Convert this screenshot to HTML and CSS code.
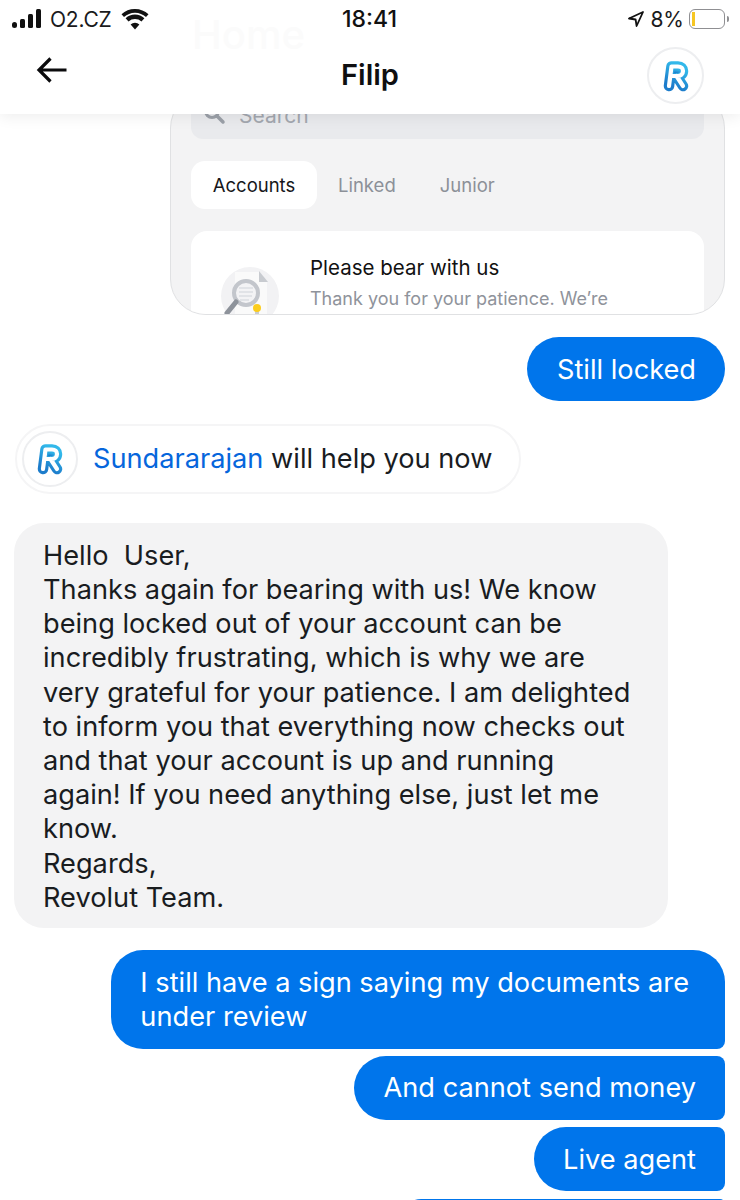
FILE: index.html
```html
<!DOCTYPE html>
<html lang="en">
<head>
<meta charset="utf-8">
<title>Filip</title>
<link rel="stylesheet" href="styles.css">
</head>
<body>
<div class="phone">
  <header class="top">
    <div class="ghost-home">Home</div>
    <div class="status">
      <div class="status-left">
        <svg class="signal" width="34" height="20" viewBox="0 0 34 20"><rect x="0" y="13" width="5" height="6" rx="2.5"/><rect x="8" y="10" width="5" height="9" rx="1.5"/><rect x="16" y="5" width="5" height="14" rx="1.5"/><rect x="24" y="0" width="5" height="19" rx="1.5"/></svg>
        <span class="carrier">O2.CZ</span>
        <svg class="wifi" width="28" height="21" viewBox="0 0 28 21"><path d="M14 20.5 9.6 15.6a6.4 6.4 0 0 1 8.8 0Z"/><path d="M14 5.6c3.6 0 7 1.4 9.4 3.7l-2.9 3.2a9.8 9.8 0 0 0-13 0L4.6 9.3A13.6 13.6 0 0 1 14 5.6Z"/><path d="M14 0c5.200 0 10 2 13.500 5.300l-2.500 2.800A16.800 16.800 0 0 0 14 3.700 16.800 16.800 0 0 0 3 8.100L.5 5.300A19.600 19.600 0 0 1 14 0Z"/></svg>
      </div>
      <div class="clock">18:41</div>
      <div class="status-right">
        <svg class="arrow-loc" width="16" height="16" viewBox="0 0 16 16"><path d="M15 1 1 7.500l6.600 1 1 6.500Z" fill="none" stroke="#111" stroke-width="1.800" stroke-linejoin="round"/></svg>
        <span class="pct">8%</span>
        <div class="battery"><div class="battery-level"></div></div>
        <div class="battery-cap"></div>
      </div>
    </div>
    <div class="navbar">
      <svg class="back" width="32" height="28" viewBox="0 0 32 28"><path d="M30.500 14H3M14.500 2.500 3 14l11.500 11.500" fill="none" stroke="#0b0b0d" stroke-width="3.200"/></svg>
      <h1 class="title">Filip</h1>
      <div class="avatar avatar-nav">
        <svg width="30" height="32" viewBox="0 0 30 32"><use href="#rlogo"/></svg>
      </div>
    </div>
  </header>

  <main class="chat">
    <div class="shot-wrap">
      <div class="shot">
        <div class="search">
          <svg class="search-icon" width="24" height="24" viewBox="0 0 24 24"><circle cx="10" cy="9" r="6.500" fill="none" stroke="#9ba0a8" stroke-width="3"/><path d="m15 14 6 6" stroke="#9ba0a8" stroke-width="3.500" stroke-linecap="round"/></svg>
          <span class="search-text">Search</span>
        </div>
        <div class="tabs">
          <span class="tab tab-active">Accounts</span>
          <span class="tab tab-linked">Linked</span>
          <span class="tab tab-junior">Junior</span>
        </div>
        <div class="notice">
          <div class="notice-pic">
            <svg width="64" height="64" viewBox="0 0 64 64">
              <circle cx="30" cy="32" r="29" fill="#f2f2f4"/>
              <path d="M15 8h24l8 9v35H15Z" fill="#fafafa"/>
              <path d="M39 7l9 11h-9Z" fill="#c8cbd0"/>
              <circle cx="26" cy="29" r="12" fill="#f3f3f5" stroke="#c3c6cc" stroke-width="4"/>
              <path d="M19 24h14M19 28h14M19 32h13M20 36h9" stroke="#dcdee2" stroke-width="1.500"/>
              <path d="m16 38-9 11" stroke="#8e939b" stroke-width="5" stroke-linecap="round"/>
              <path d="M35 46h4v14h-4Z" fill="#c9ccd2"/>
              <circle cx="37" cy="44" r="4" fill="#fbcd1e"/>
            </svg>
          </div>
          <div class="notice-text">
            <div class="notice-title">Please bear with us</div>
            <div class="notice-sub">Thank you for your patience. We’re</div>
          </div>
        </div>
      </div>
    </div>

    <div class="msg msg-out msg-locked">Still locked</div>

    <div class="agent-pill">
      <div class="avatar avatar-pill">
        <svg width="30" height="32" viewBox="0 0 30 32"><use href="#rlogo"/></svg>
      </div>
      <div class="agent-text"><span class="agent-name">Sundararajan</span> will help you now</div>
    </div>

    <div class="msg msg-in">Hello&nbsp; User,<br>Thanks again for bearing with us! We know<br>being locked out of your account can be<br>incredibly frustrating, which is why we are<br>very grateful for your patience. I am delighted<br>to inform you that everything now checks out<br>and that your account is up and running<br>again! If you need anything else, just let me<br>know.<br>Regards,<br>Revolut Team.</div>

    <div class="msg msg-out msg-review">I still have a sign saying my documents are<br>under review</div>
    <div class="msg msg-out msg-send">And cannot send money</div>
    <div class="msg msg-out msg-live">Live agent</div>
    <div class="msg-next"></div>
  </main>

  <svg class="defs" width="0" height="0" aria-hidden="true">
    <defs>
      <linearGradient id="rgrad" x1="0.7" y1="0" x2="0.3" y2="1">
        <stop offset="0" stop-color="#32b8ea"/>
        <stop offset="1" stop-color="#1c7ccb"/>
      </linearGradient>
      <symbol id="rlogo" viewBox="0 0 30 32">
        <path d="M10.500 6.500 8 26M10.500 6.500H17c3.200 0 5 1.900 5 4.500 0 3-2.300 5-5.500 5H9.500M15.500 16 22 26" fill="none" stroke="url(#rgrad)" stroke-width="10.500" stroke-linecap="round" stroke-linejoin="round"/>
        <path d="M10.500 6.500 8 26M10.500 6.500H17c3.200 0 5 1.900 5 4.500 0 3-2.300 5-5.500 5H9.500M15.500 16 22 26" fill="none" stroke="#fff" stroke-width="4.200" stroke-linecap="round" stroke-linejoin="round"/>
        <path d="M13.500 9.800h3.800c1.100 0 1.700.5 1.700 1.300 0 1.100-1 1.800-2.500 1.800h-3.400Z" fill="url(#rgrad)"/>
      </symbol>
    </defs>
  </svg>
</div>
</body>
</html>
```

FILE: styles.css
```css
* { box-sizing: border-box; }
html, body { margin: 0; padding: 0; background: #fff; }
body { font-family: Inter, "Liberation Sans", sans-serif; color: #191c1f; }
.phone { width: 740px; height: 1200px; overflow: hidden; display: flex; flex-direction: column; position: relative; }

.top { height: 114px; flex: none; background: #fff; position: relative; z-index: 2; box-shadow: 0 3px 14px rgba(0,0,0,.07); }
.ghost-home { position: absolute; left: 192px; top: 10px; font-size: 40px; font-weight: 500; color: #fbfbfb; }
.status { height: 38px; display: grid; grid-template-columns: 1fr auto 1fr; align-items: center; padding: 0 11px 0 12px; position: relative; }
.status-left { display: flex; align-items: center; }
.signal { fill: #111; margin-top: -1px; }
.carrier { font-size: 21px; color: #1a1a1c; margin-left: 4px; letter-spacing: -.2px; }
.wifi { fill: #111; margin-left: 9px; }
.clock { font-size: 23px; font-weight: 500; color: #111; margin-left: -2px; }
.status-right { display: flex; align-items: center; justify-content: flex-end; }
.arrow-loc { margin-right: 6px; }
.pct { font-size: 21px; color: #1a1a1c; margin-right: 5px; }
.battery { width: 36px; height: 20px; border: 1.500px solid #8f8f92; border-radius: 6px; padding: 2px; background: #fff; }
.battery-level { width: 3px; height: 100%; background: #f6c623; }
.battery-cap { width: 2px; height: 6px; background: #8f8f92; margin-left: 2px; border-radius: 0 2px 2px 0; }

.navbar { height: 76px; display: grid; grid-template-columns: 1fr auto 1fr; align-items: center; padding: 0 36px; }
.back { justify-self: start; margin-top: -12px; }
.title { font-size: 29px; font-weight: 600; margin: 0; color: #0f0f11; line-height: 1; margin-top: -4px; }
.avatar { border-radius: 50%; border: 2px solid #edeef0; background: #fff; display: flex; align-items: center; justify-content: center; }
.avatar-nav { width: 57px; height: 57px; justify-self: end; margin-right: 0; margin-top: -1px; }
.defs { position: absolute; }

.chat { flex: 1; display: flex; flex-direction: column; min-height: 0; padding: 0 15px 0 14px; position: relative; z-index: 1; }
.chat > * { flex: none; }

.shot-wrap { align-self: flex-end; width: 555px; margin-top: -22px; margin-bottom: 22px; }
.shot { height: 223px; background: #f3f3f4; border: 1.500px solid #e0e1e3; border-radius: 36px; overflow: hidden; padding: 0 20px; }
.search { height: 46px; background: #e9eaed; border-radius: 12px; display: flex; align-items: center; padding: 0 11px; }
.search-icon { flex: none; margin-top: -4px; }
.search-text { font-size: 21px; color: #a3a7af; margin-left: 13px; line-height: 30px; margin-top: -1px; }
.tabs { display: flex; align-items: center; margin-top: 22px; height: 48px; }
.tab { font-size: 18.500px; color: #8c9098; }
.tab-active { width: 126px; height: 48px; background: #fff; border-radius: 14px; color: #16171a; display: flex; align-items: center; justify-content: center; }
.tab-linked { margin-left: 21px; }
.tab-junior { margin-left: 44px; }
.notice { margin-top: 22px; height: 100px; background: #fff; border-radius: 16px; display: flex; padding: 24px 0 0 29px; }
.notice-pic { width: 64px; height: 64px; flex: none; margin-top: 9px; }
.notice-text { margin-left: 26px; }
.notice-title { font-size: 20.500px; color: #111; line-height: 26px; }
.notice-sub { font-size: 18px; color: #8f939b; line-height: 26px; margin-top: 5px; }

.msg { font-size: 27.200px; line-height: 34.200px; }
.msg-out { align-self: flex-end; background: #0075eb; color: #fff; border-radius: 32px 8px 8px 32px; padding: 15.500px 29px 14.500px 30px; }
.msg-locked { border-radius: 32px; }
.msg-review { border-radius: 32px 32px 8px 32px; margin-top: 22px; padding: 15.500px 36px 14.500px 29px; }
.msg-send { margin-top: 7px; }
.msg-live { margin-top: 7px; padding-left: 29px; }
.msg-next { align-self: flex-end; width: 324px; height: 20px; margin-top: 8px; background: #0075eb; border-radius: 32px 8px 0 0; }

.agent-pill { align-self: flex-start; margin-top: 23px; margin-left: 1px; height: 70px; width: 506px; border: 2px solid #f5f5f6; border-radius: 35px; display: flex; align-items: center; padding-left: 5px; }
.avatar-pill { width: 56px; height: 56px; flex: none; }
.agent-text { font-size: 27.200px; margin-left: 15px; margin-top: -2px; color: #191c1f; }
.agent-name { color: #0666dc; }

.msg-in { align-self: flex-start; width: 654px; margin-top: 29px; background: #f3f3f4; color: #191c1f; border-radius: 30px; padding: 15.500px 20px 13.500px 29px; }
```
